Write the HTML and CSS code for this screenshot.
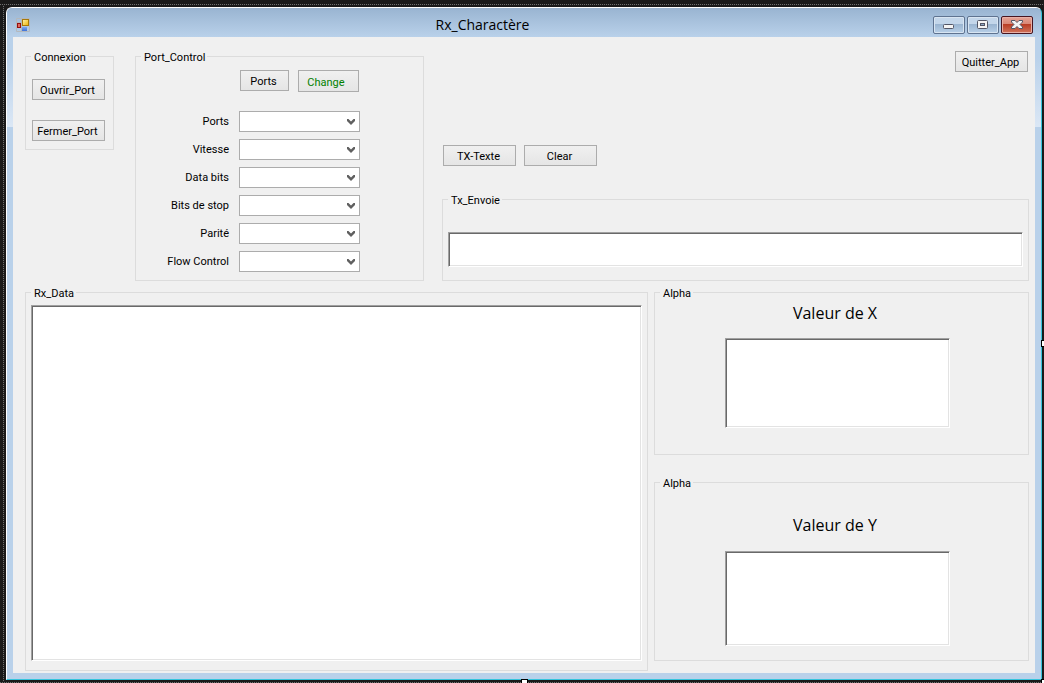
FILE: index.html
```html
<!DOCTYPE html>
<html lang="fr">
<head>
<meta charset="utf-8">
<title>Rx_Charactère</title>
<link rel="stylesheet" href="styles.css">
</head>
<body>
<div class="designer">
  <div class="window">
    <header class="titlebar">
      <svg class="app-icon" width="14" height="14" viewBox="0 0 14 14" aria-hidden="true">
        <defs>
          <linearGradient id="gold" x1="0" y1="0" x2="1" y2="1"><stop offset="0" stop-color="#fff3b0"/><stop offset="1" stop-color="#f0b400"/></linearGradient>
          <linearGradient id="blue" x1="0" y1="0" x2="0" y2="1"><stop offset="0" stop-color="#7ba6ee"/><stop offset="1" stop-color="#3f72d8"/></linearGradient>
        </defs>
        <path d="M.5 .5h13v13h-13z M.5 4.5h5 M5.500 .5v13" fill="none" stroke="#b4b8bc"/>
        <rect x="1.500" y="5.500" width="3" height="4" fill="#e06a60" stroke="#960f0f"/>
        <rect x="6.500" y="1.500" width="6" height="6" fill="url(#gold)" stroke="#a87808"/>
        <rect x="6" y="9" width="5" height="4" fill="url(#blue)"/>
      </svg>
      <h1 class="title">Rx_Charactère</h1>
      <div class="window-controls">
        <button class="control" type="button" aria-label="Réduire">
          <svg width="30" height="16" viewBox="0 0 30 16"><rect x="9.500" y="7.500" width="10" height="4" rx="1" fill="#f4f4f4" stroke="#535666"/></svg>
        </button>
        <button class="control" type="button" aria-label="Agrandir">
          <svg width="30" height="16" viewBox="0 0 30 16"><rect x="9.500" y="3.500" width="10" height="8" rx="1" fill="#f4f4f4" stroke="#535666"/><rect x="12.500" y="6.500" width="4" height="2" fill="#8fa9c6" stroke="#535666"/></svg>
        </button>
        <button class="control control-close" type="button" aria-label="Fermer">
          <svg width="30" height="16" viewBox="0 0 30 16"><path d="M9.500 3.500h3.500l2 2 2-2h3.500v1.500l-2.500 2.500 2.500 2.500v1.500h-3.500l-2-2-2 2h-3.500v-1.500l2.500-2.500-2.500-2.500z" fill="#f4f4f4" stroke="#535666"/></svg>
        </button>
      </div>
    </header>
    <main class="client">
      <section class="top">
        <fieldset class="group connexion">
          <legend>Connexion</legend>
          <button class="btn" type="button">Ouvrir_Port</button>
          <button class="btn" type="button">Fermer_Port</button>
        </fieldset>
        <fieldset class="group port-control">
          <legend>Port_Control</legend>
          <div class="port-buttons">
            <button class="btn btn-ports" type="button">Ports</button>
            <button class="btn btn-change" type="button">Change</button>
          </div>
          <div class="settings">
            <label for="ports">Ports</label>
            <div class="combo"><select id="ports"></select><svg class="arrow" width="8" height="6" viewBox="0 0 8 6"><path d="M0 0h1.500l2.500 2.500 2.500-2.500h1.500v2l-4 4-4-4z" fill="#606060"/></svg></div>
            <label for="vitesse">Vitesse</label>
            <div class="combo"><select id="vitesse"></select><svg class="arrow" width="8" height="6" viewBox="0 0 8 6"><path d="M0 0h1.500l2.500 2.500 2.500-2.500h1.500v2l-4 4-4-4z" fill="#606060"/></svg></div>
            <label for="databits">Data bits</label>
            <div class="combo"><select id="databits"></select><svg class="arrow" width="8" height="6" viewBox="0 0 8 6"><path d="M0 0h1.500l2.500 2.500 2.500-2.500h1.500v2l-4 4-4-4z" fill="#606060"/></svg></div>
            <label for="stopbits">Bits de stop</label>
            <div class="combo"><select id="stopbits"></select><svg class="arrow" width="8" height="6" viewBox="0 0 8 6"><path d="M0 0h1.500l2.500 2.500 2.500-2.500h1.500v2l-4 4-4-4z" fill="#606060"/></svg></div>
            <label for="parite">Parité</label>
            <div class="combo"><select id="parite"></select><svg class="arrow" width="8" height="6" viewBox="0 0 8 6"><path d="M0 0h1.500l2.500 2.500 2.500-2.500h1.500v2l-4 4-4-4z" fill="#606060"/></svg></div>
            <label for="flow">Flow Control</label>
            <div class="combo"><select id="flow"></select><svg class="arrow" width="8" height="6" viewBox="0 0 8 6"><path d="M0 0h1.500l2.500 2.500 2.500-2.500h1.500v2l-4 4-4-4z" fill="#606060"/></svg></div>
          </div>
        </fieldset>
        <div class="send">
          <button class="btn btn-quit" type="button">Quitter_App</button>
          <div class="send-buttons">
            <button class="btn" type="button">TX-Texte</button>
            <button class="btn" type="button">Clear</button>
          </div>
          <fieldset class="group envoie">
            <legend>Tx_Envoie</legend>
            <input class="field" type="text" aria-label="Tx_Envoie">
          </fieldset>
        </div>
      </section>
      <section class="bottom">
        <fieldset class="group rx">
          <legend>Rx_Data</legend>
          <textarea class="field" aria-label="Rx_Data"></textarea>
        </fieldset>
        <div class="values">
          <fieldset class="group value">
            <legend>Alpha</legend>
            <div class="value-body">
              <label for="valx">Valeur de X</label>
              <textarea class="field" id="valx"></textarea>
            </div>
          </fieldset>
          <fieldset class="group value value-y">
            <legend>Alpha</legend>
            <div class="value-body">
              <label for="valy">Valeur de Y</label>
              <textarea class="field" id="valy"></textarea>
            </div>
          </fieldset>
        </div>
      </section>
    </main>
  </div>
  <span class="handle handle-right"></span>
  <span class="handle handle-bottom"></span>
  <span class="handle handle-corner"></span>
</div>
</body>
</html>
```
FILE: styles.css
```css
* { box-sizing: border-box; }

body {
  margin: 0;
  background: #1e1e1e;
  color: #000;
  font: 11px/13px Roboto, "Liberation Sans", sans-serif;
}

button, input, select, textarea { font: inherit; color: inherit; margin: 0; border-radius: 0; }

/* Dark design surface with a dotted selection outline */
.designer {
  position: relative;
  display: flex;
  min-height: 100vh;
  padding: 7px 2px 3px 6px;
  background:
    repeating-linear-gradient(90deg, #6e6e6e 0 1px, #1e1e1e 1px 2px) 0 4px / 100% 1px no-repeat,
    repeating-linear-gradient(90deg, #6e6e6e 0 1px, #1e1e1e 1px 2px) 0 100% / 100% 1px no-repeat,
    repeating-linear-gradient(#6e6e6e 0 1px, #1e1e1e 1px 2px) 3px 4px / 1px 100% no-repeat,
    #1a1a1a;
}

.handle { position: absolute; background: #fff; border: 1px solid #000; }
.handle-right { right: 0; top: 50%; width: 3px; height: 7px; margin-top: -2px; border-right: 0; }
.handle-bottom { left: 50%; bottom: 0; width: 7px; height: 4px; margin-left: -1px; border-bottom: 0; }
.handle-corner { right: 0; bottom: 0; width: 3px; height: 4px; border-width: 1px 0 0 1px; }

.window {
  flex: 1;
  display: flex;
  flex-direction: column;
  border: 1px solid #fff;
  border-right-color: #35c4dc;
  border-bottom-color: #35c4dc;
  border-radius: 6px 6px 0 0;
  background: linear-gradient(#99b4d1 0, #b9d1ea 29px, #b9d1ea 50px, #dbe7f5 119px, #b9d1ea 119px);
  padding: 0 6px 6px;
}

.titlebar {
  display: grid;
  grid-template-columns: 1fr auto 1fr;
  height: 29px;
  margin: 0 -6px;
  padding: 0 8px 0 9px;
  background: linear-gradient(#99b4d1, #b9d1ea);
  border-radius: 5px 5px 0 0;
}
.app-icon { margin-top: 10px; }
.title {
  margin: 7px 84px 0 0;
  font: 14px/20px "Open Sans", "Noto Sans", sans-serif;
}
.window-controls { display: flex; justify-content: flex-end; gap: 2px; margin-top: 8px; }
.control {
  display: flex;
  width: 32px;
  height: 18px;
  padding: 0;
  border: 1px solid #5f7390;
  border-radius: 2px;
  background: linear-gradient(#c3d6ea 0 45%, #99b4d0 45%, #b8d0e8);
  box-shadow: inset 0 0 0 1px #d8e5f2;
}
.control-close {
  border-color: #471520;
  background: linear-gradient(#e5a396 0, #d88675 45%, #b83c24 45%, #d1745c);
  box-shadow: inset 0 0 0 1px #e8b0a6;
}

.client {
  flex: 1;
  display: flex;
  flex-direction: column;
  gap: 4px;
  padding: 12px 6px 2px 12px;
  background: #f0f0f0;
}

.group {
  min-width: 0;
  margin: 0;
  padding: 0 5px;
  border: 1px solid #dcdcdc;
}
.group legend { padding: 2px 2px 0 3px; }

.btn {
  width: 73px;
  height: 21px;
  padding: 2px 2px 0 0;
  border: 1px solid #acacac;
  background: linear-gradient(#f0f0f0, #e5e5e5);
}

.field {
  display: block;
  width: 100%;
  padding: 3px;
  border: 1px solid;
  border-color: #a0a0a0 #fff #fff #a0a0a0;
  background: #fff;
  box-shadow: inset 1px 1px #696969, inset -1px -1px #e3e3e3;
  resize: none;
  outline: 0;
}

.top { display: grid; grid-template-columns: 89px 289px 1fr; column-gap: 21px; }

.connexion {
  align-self: start;
  display: grid;
  gap: 20px;
  padding: 15px 7px 8px 5px;
  justify-content: center;
}

.port-buttons { display: flex; gap: 9px; padding: 6px 0 0 99px; }
.btn-ports { width: 49px; }
.btn-change { width: 61px; height: 22px; padding-right: 5px; color: #008000; }

.settings {
  display: grid;
  grid-template-columns: 88px 121px;
  gap: 7px 10px;
  padding: 19px 0 8px;
  align-items: center;
  text-align: right;
}
.combo { position: relative; height: 21px; }
.combo select {
  display: block;
  width: 100%;
  height: 100%;
  border: 1px solid #acacac;
  background: #fff;
  appearance: none;
}
.arrow { position: absolute; right: 5px; top: 8px; pointer-events: none; }

.send { display: flex; flex-direction: column; margin: 2px 0 0 -3px; }
.btn-quit { align-self: flex-end; margin-right: 1px; }
.send-buttons { display: flex; gap: 8px; margin: 73px 0 auto 1px; }
.envoie { padding: 25px 5px 13px; }
.envoie .field { height: 35px; }

.bottom { flex: 1; display: grid; grid-template-columns: 623fr 375fr; gap: 6px; }
.rx { padding: 5px 5px 9px; }
.rx .field { height: 100%; }

.values { display: flex; flex-direction: column; gap: 20px; padding-bottom: 10px; }
.value { flex: 1; padding: 3px 5px 0; }
.value-body { padding: 0 73px 0 65px; }
.value label {
  display: block;
  padding-right: 5px;
  font: 16px/20px "Open Sans", "Noto Sans", sans-serif;
  text-align: center;
}
.value .field { height: 90px; margin: 15px 0 26px; }
.value-y { padding-top: 25px; }
.value-y .field { height: 95px; margin: 16px 0 14px; }
```
